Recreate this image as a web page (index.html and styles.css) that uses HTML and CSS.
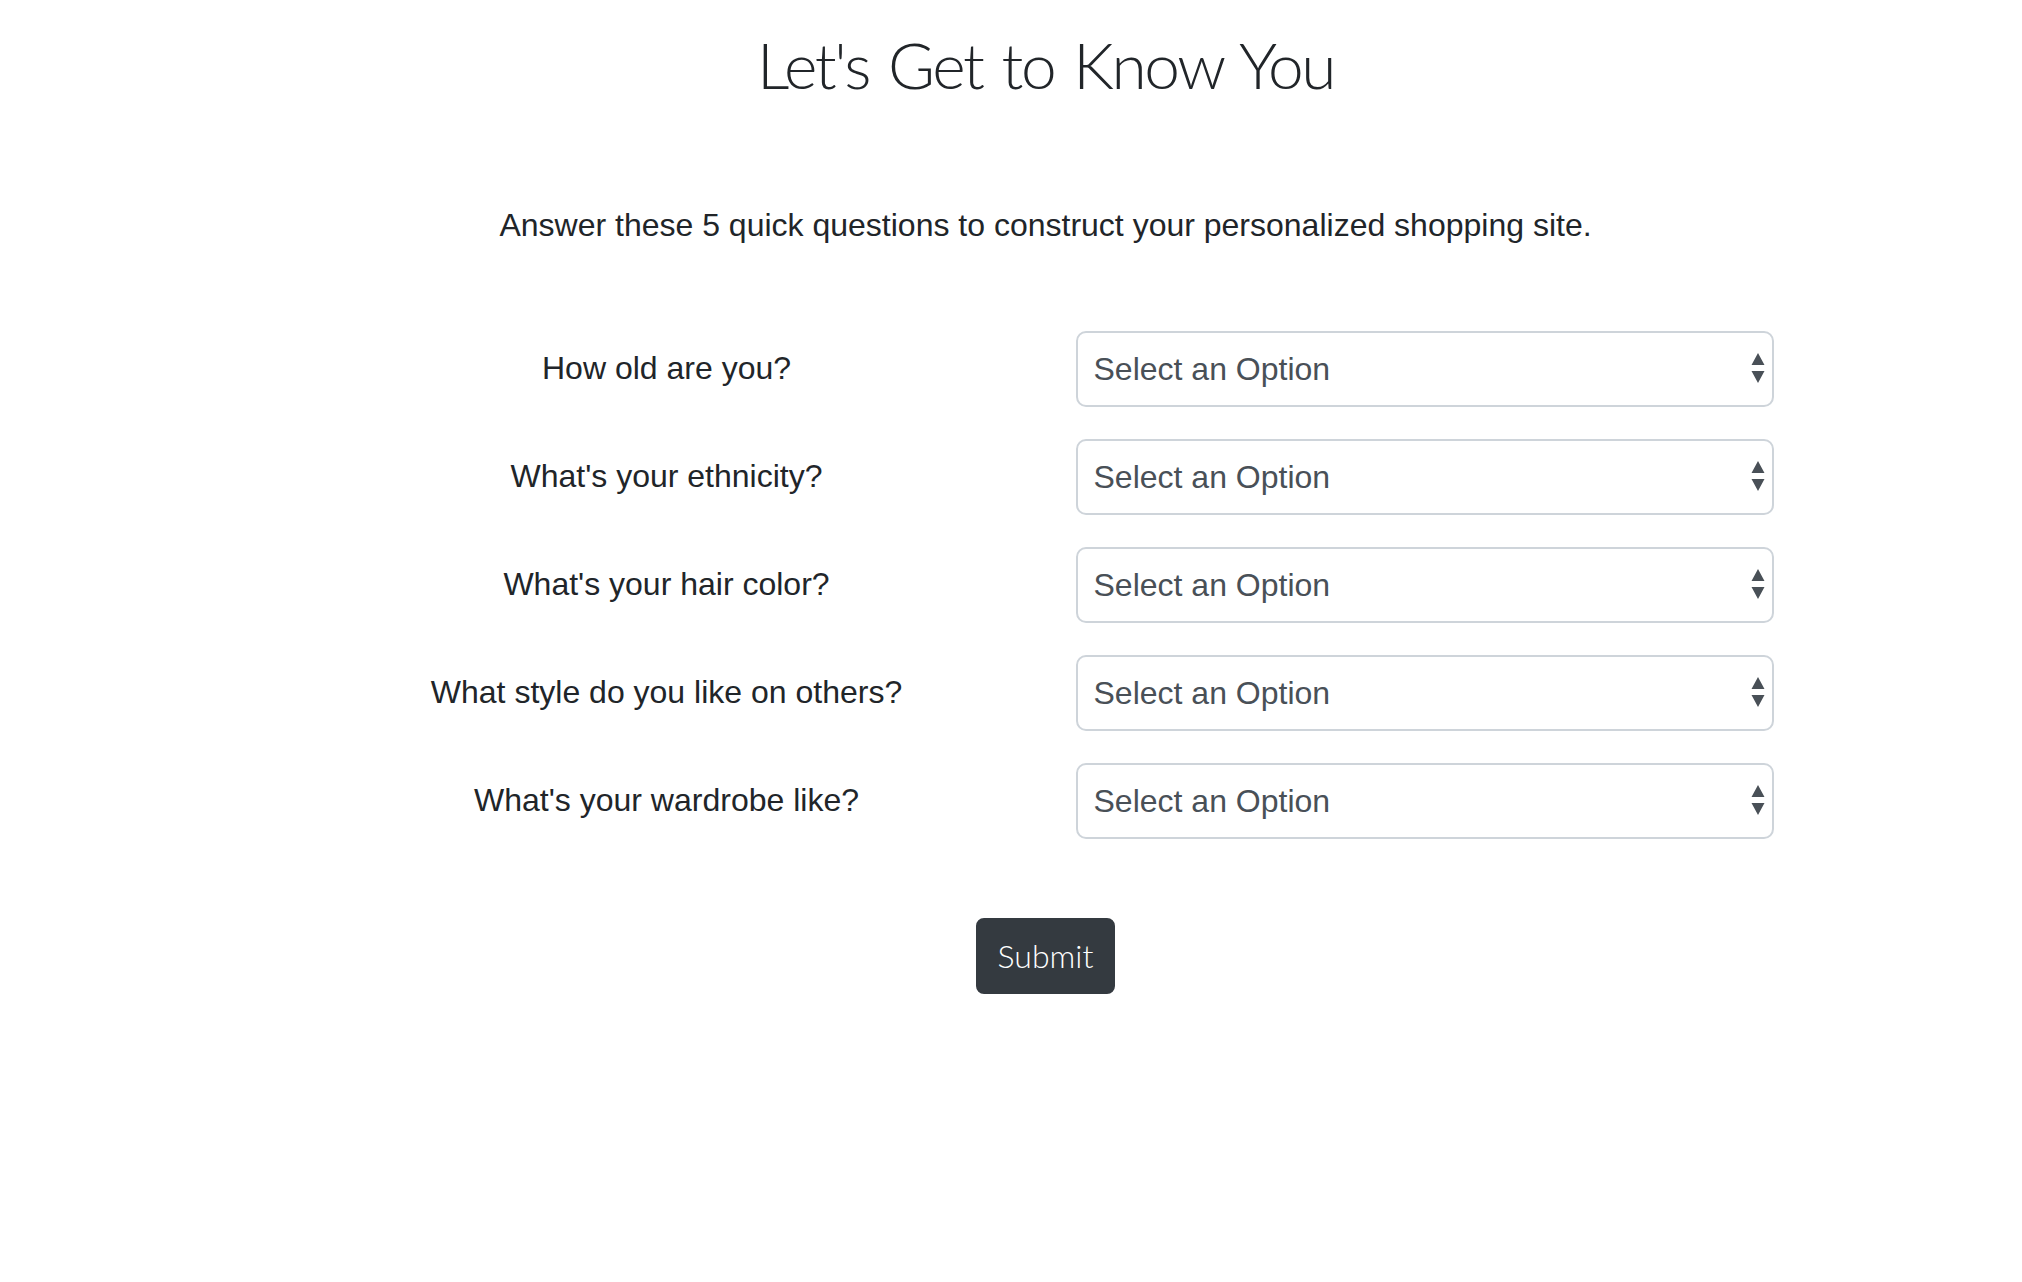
FILE: index.html
```html
<!DOCTYPE html>
<html lang="en">
<head>
<meta charset="utf-8">
<title>Let's Get to Know You</title>
<link rel="stylesheet" href="styles.css">
</head>
<body>
<div class="page">
  <h1 class="title">Let's Get to Know You</h1>
  <p class="intro">Answer these 5 quick questions to construct your personalized shopping site.</p>
  <form class="quiz">
    <div class="field">
      <label class="question" for="q1">How old are you?</label>
      <div class="select-col">
        <div class="select-wrap">
          <select id="q1" class="select"><option>Select an Option</option></select>
          <svg class="arrows" width="14" height="31" viewBox="0 0 14 31"><path d="M7 0 L13.5 12 L0.5 12 Z M0.5 18 L13.5 18 L7 30 Z" fill="#495057"/></svg>
        </div>
      </div>
    </div>
    <div class="field">
      <label class="question" for="q2">What's your ethnicity?</label>
      <div class="select-col">
        <div class="select-wrap">
          <select id="q2" class="select"><option>Select an Option</option></select>
          <svg class="arrows" width="14" height="31" viewBox="0 0 14 31"><path d="M7 0 L13.5 12 L0.5 12 Z M0.5 18 L13.5 18 L7 30 Z" fill="#495057"/></svg>
        </div>
      </div>
    </div>
    <div class="field">
      <label class="question" for="q3">What's your hair color?</label>
      <div class="select-col">
        <div class="select-wrap">
          <select id="q3" class="select"><option>Select an Option</option></select>
          <svg class="arrows" width="14" height="31" viewBox="0 0 14 31"><path d="M7 0 L13.5 12 L0.5 12 Z M0.5 18 L13.5 18 L7 30 Z" fill="#495057"/></svg>
        </div>
      </div>
    </div>
    <div class="field">
      <label class="question" for="q4">What style do you like on others?</label>
      <div class="select-col">
        <div class="select-wrap">
          <select id="q4" class="select"><option>Select an Option</option></select>
          <svg class="arrows" width="14" height="31" viewBox="0 0 14 31"><path d="M7 0 L13.5 12 L0.5 12 Z M0.5 18 L13.5 18 L7 30 Z" fill="#495057"/></svg>
        </div>
      </div>
    </div>
    <div class="field">
      <label class="question" for="q5">What's your wardrobe like?</label>
      <div class="select-col">
        <div class="select-wrap">
          <select id="q5" class="select"><option>Select an Option</option></select>
          <svg class="arrows" width="14" height="31" viewBox="0 0 14 31"><path d="M7 0 L13.5 12 L0.5 12 Z M0.5 18 L13.5 18 L7 30 Z" fill="#495057"/></svg>
        </div>
      </div>
    </div>
    <div class="actions">
      <button type="button" class="submit">Submit</button>
    </div>
  </form>
</div>
</body>
</html>
```

FILE: styles.css
```css
html, body {
  margin: 0;
  padding: 0;
  background: #ffffff;
  overflow-x: hidden;
}

body {
  font-family: "Liberation Sans", Arial, sans-serif;
  color: #212529;
}

.page {
  width: 2091px;
  display: flex;
  flex-direction: column;
  align-items: center;
}

.title {
  margin: 25px 0 0;
  font-family: "Lato", sans-serif;
  font-weight: 300;
  font-size: 64px;
  line-height: 80px;
  color: #212529;
  letter-spacing: -2.4px;
  word-spacing: 4px;
}

.intro {
  margin: 96px 0 0;
  font-size: 32px;
  line-height: 48px;
  text-align: center;
}

.quiz {
  width: 1516px;
  margin-top: 82px;
  display: flex;
  flex-direction: column;
}

.field {
  display: grid;
  grid-template-columns: 1fr 1fr;
  align-items: center;
  margin-bottom: 32px;
}

.question {
  padding: 0 30px;
  font-size: 32px;
  line-height: 48px;
  text-align: center;
  position: relative;
  top: -1px;
}

.select-col {
  padding: 0 30px;
}

.select-wrap {
  position: relative;
}

.select {
  display: block;
  width: 100%;
  height: 76px;
  box-sizing: border-box;
  -webkit-appearance: none;
  appearance: none;
  background: #ffffff;
  border: 2px solid #ced4da;
  border-radius: 10px;
  padding: 0 40px 0 16px;
  font-family: "Liberation Sans", Arial, sans-serif;
  font-size: 32px;
  line-height: 48px;
  color: #495057;
  outline: none;
}

.arrows {
  position: absolute;
  right: 9px;
  top: 22px;
  pointer-events: none;
}

.actions {
  display: flex;
  justify-content: center;
  margin-top: 47px;
}

.submit {
  height: 76px;
  padding: 0 20px;
  border: 2px solid #343a40;
  border-radius: 8px;
  background: #343a40;
  color: #ffffff;
  font-family: "Lato", sans-serif;
  font-weight: 300;
  font-size: 32px;
  line-height: 48px;
  cursor: pointer;
}
```
